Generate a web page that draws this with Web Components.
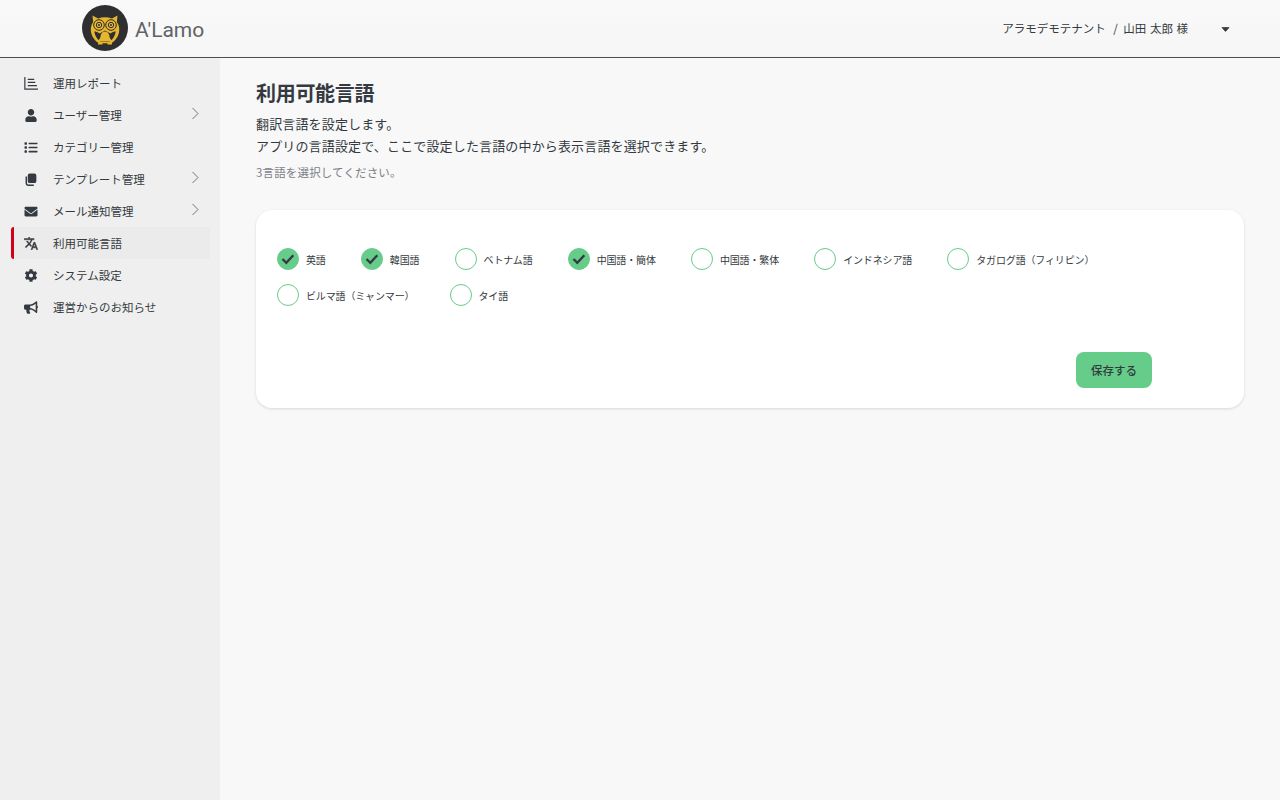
<!DOCTYPE html>
<html lang="ja"><head><meta charset="utf-8"><title>利用可能言語</title>
<style>
html,body{margin:0;height:100%}
body{font-family:"Noto Sans CJK JP","Noto Sans",sans-serif;background:#f8f8f9;color:#343a40}
</style></head><body>
<app-shell>
  <app-header slot="header"></app-header>
  <side-nav slot="nav">
    <nav-item icon="chart" label="運用レポート"></nav-item>
    <nav-item icon="user" label="ユーザー管理" arrow></nav-item>
    <nav-item icon="list" label="カテゴリー管理"></nav-item>
    <nav-item icon="copy" label="テンプレート管理" arrow></nav-item>
    <nav-item icon="mail" label="メール通知管理" arrow></nav-item>
    <nav-item icon="lang" label="利用可能言語" active></nav-item>
    <nav-item icon="cog" label="システム設定"></nav-item>
    <nav-item icon="horn" label="運営からのお知らせ"></nav-item>
  </side-nav>
  <lang-page>
    <lang-check checked>英語</lang-check>
    <lang-check checked>韓国語</lang-check>
    <lang-check>ベトナム語</lang-check>
    <lang-check checked>中国語・簡体</lang-check>
    <lang-check>中国語・繁体</lang-check>
    <lang-check>インドネシア語</lang-check>
    <lang-check>タガログ語（フィリピン）</lang-check>
    <lang-check>ビルマ語（ミャンマー）</lang-check>
    <lang-check>タイ語</lang-check>
  </lang-page>
</app-shell>
<script>
const ICONS={
chart:['0 0 13 12','<path fill="none" stroke="currentColor" stroke-width="1.100" d="M.8 0v11.200H13M3.500 2.200h6M3.500 5h7M3.500 7.900h8.500"/>'],
user:['0 0 448 512','<path fill="currentColor" d="M224 256c70.7 0 128-57.3 128-128S294.7 0 224 0 96 57.3 96 128s57.3 128 128 128zm89.6 32h-16.7c-22.2 10.2-46.9 16-72.9 16s-50.6-5.8-72.9-16h-16.7C60.2 288 0 348.2 0 422.4V464c0 26.5 21.5 48 48 48h352c26.5 0 48-21.5 48-48v-41.6c0-74.2-60.2-134.4-134.4-134.4z"/>'],
list:['0 0 512 512','<path fill="currentColor" d="M80 368H16a16 16 0 0 0-16 16v64a16 16 0 0 0 16 16h64a16 16 0 0 0 16-16v-64a16 16 0 0 0-16-16zm0-320H16A16 16 0 0 0 0 64v64a16 16 0 0 0 16 16h64a16 16 0 0 0 16-16V64a16 16 0 0 0-16-16zm0 160H16a16 16 0 0 0-16 16v64a16 16 0 0 0 16 16h64a16 16 0 0 0 16-16v-64a16 16 0 0 0-16-16zm416 176H176a16 16 0 0 0-16 16v32a16 16 0 0 0 16 16h320a16 16 0 0 0 16-16v-32a16 16 0 0 0-16-16zm0-320H176a16 16 0 0 0-16 16v32a16 16 0 0 0 16 16h320a16 16 0 0 0 16-16V80a16 16 0 0 0-16-16zm0 160H176a16 16 0 0 0-16 16v32a16 16 0 0 0 16 16h320a16 16 0 0 0 16-16v-32a16 16 0 0 0-16-16z"/>'],
copy:['0 0 16 16','<path fill="currentColor" d="M6.400 .6h5.800A2.400 2.400 0 0 1 14.600 3v7A2.400 2.400 0 0 1 12.200 12.400H6.400A2.400 2.400 0 0 1 4 10V3A2.400 2.400 0 0 1 6.400 .6z"/><path fill="none" stroke="currentColor" stroke-width="1.800" d="M2.200 4.400v7.800a2.800 2.800 0 0 0 2.800 2.800h6.400"/>'],
mail:['0 0 512 512','<path fill="currentColor" d="M502.3 190.8c3.9-3.1 9.7-.2 9.7 4.7V400c0 26.5-21.5 48-48 48H48c-26.5 0-48-21.5-48-48V195.6c0-5 5.7-7.8 9.7-4.7 22.4 17.4 52.1 39.5 154.1 113.6 21.1 15.4 56.7 47.8 92.2 47.6 35.7.3 72-32.8 92.3-47.6 102-74.1 131.6-96.3 154-113.7zM256 320c23.2.4 56.6-29.2 73.4-41.4 132.7-96.3 142.8-104.7 173.4-128.7 5.8-4.5 9.2-11.5 9.2-18.9v-19c0-26.5-21.5-48-48-48H48C21.5 64 0 85.500 0 112v19c0 7.4 3.4 14.3 9.2 18.9 30.6 23.9 40.7 32.4 173.4 128.7 16.8 12.2 50.2 41.8 73.4 41.4z"/>'],
lang:['1 1.500 22 21','<path fill="currentColor" stroke="currentColor" stroke-width=".7" d="M12.87 15.07l-2.54-2.51.03-.03c1.74-1.94 2.98-4.17 3.71-6.53H17V4h-7V2H8v2H1v1.99h11.17C11.5 7.92 10.44 9.75 9 11.35 8.07 10.32 7.3 9.19 6.69 8h-2c.73 1.63 1.73 3.17 2.98 4.56l-5.09 5.02L4 19l5-5 3.11 3.11.76-2.04zM18.5 10h-2L12 22h2l1.12-3h4.75L21 22h2l-4.5-12zm-2.62 7l1.62-4.33L19.12 17h-3.24z"/>'],
cog:['0 0 512 512','<path fill="currentColor" d="M487.4 315.7l-42.6-24.6c4.3-23.2 4.3-47 0-70.2l42.6-24.6c4.9-2.8 7.1-8.6 5.5-14-11.1-35.6-30-67.8-54.7-94.6-3.8-4.1-10-5.1-14.8-2.3L380.8 110c-17.9-15.4-38.5-27.3-60.8-35.1V25.8c0-5.6-3.9-10.5-9.4-11.7-36.7-8.2-74.3-7.8-109.2 0-5.5 1.2-9.4 6.1-9.4 11.7V75c-22.2 7.9-42.8 19.8-60.8 35.1L88.7 85.5c-4.9-2.8-11-1.9-14.8 2.3-24.7 26.7-43.6 58.9-54.7 94.6-1.7 5.4.6 11.2 5.5 14L67.3 221c-4.3 23.2-4.3 47 0 70.2l-42.6 24.6c-4.9 2.8-7.1 8.6-5.5 14 11.1 35.6 30 67.8 54.7 94.6 3.8 4.1 10 5.1 14.8 2.3l42.6-24.6c17.9 15.4 38.5 27.3 60.8 35.1v49.2c0 5.6 3.9 10.5 9.4 11.7 36.7 8.2 74.3 7.8 109.2 0 5.5-1.2 9.4-6.1 9.4-11.7v-49.2c22.2-7.9 42.8-19.8 60.8-35.1l42.6 24.6c4.9 2.8 11 1.9 14.8-2.3 24.7-26.7 43.6-58.9 54.7-94.6 1.5-5.5-.7-11.3-5.6-14.1zM256 336c-44.1 0-80-35.9-80-80s35.9-80 80-80 80 35.9 80 80-35.9 80-80 80z"/>'],
horn:['0 0 576 512','<path fill="currentColor" d="M576 240c0-23.63-12.95-44.04-32-55.12V32.01C544 23.26 537.02 0 512 0c-7.12 0-14.19 2.38-19.98 7.02l-85.03 68.03C364.28 109.19 310.66 128 256 128H64c-35.35 0-64 28.65-64 64v96c0 35.35 28.65 64 64 64h33.7c-1.39 10.48-2.18 21.14-2.18 32 0 39.77 9.26 77.35 25.56 110.94 5.19 10.69 16.52 17.06 28.4 17.06h74.28c26.05 0 41.69-29.84 25.9-50.56-16.4-21.52-26.15-48.36-26.15-77.44 0-11.11 1.62-21.79 4.41-32H256c54.66 0 108.28 18.81 150.98 52.95l85.03 68.03a32.023 32.023 0 0 0 19.98 7.02c24.92 0 32-22.78 32-32V295.13C563.05 284.04 576 263.63 576 240zm-96 141.42l-33.05-26.44C392.95 311.78 325.12 288 256 288v-96c69.12 0 136.95-23.78 190.95-66.98L480 98.58v282.84z"/>']
};
function def(name,css,html){
  customElements.define(name,class extends HTMLElement{
    constructor(){super();this.attachShadow({mode:'open'})}
    connectedCallback(){
      const h=typeof html==='function'?html(this):html;
      this.shadowRoot.innerHTML='<style>'+css+'</style>'+h;
    }
  });
}
def('app-shell',`:host{display:grid;grid-template-columns:220px 1fr;grid-template-rows:58px 1fr;height:100vh;overflow:hidden}
 ::slotted(app-header){grid-column:1/3}`,
 `<slot name="header"></slot><slot name="nav"></slot><slot></slot>`);
def('app-header',`:host{display:flex;align-items:center;box-sizing:border-box;height:58px;padding:0 50px 2px 82px;border-bottom:1px solid #4a4f55;background:linear-gradient(#f9f9f9,#f6f6f6)}
 .name{font:21px Roboto,sans-serif;color:#5f6368;margin-left:7px;padding-top:4px}
 .user{margin-left:auto;font-size:11.500px;color:#343a40;display:flex;align-items:center;white-space:pre}
 .sl{margin:0 3px 0 5px}
 .nm{word-spacing:1px}
 .caret{width:9px;height:5px;margin:3px 0 0 33px;display:block}
 svg{display:block}`,
 `<svg width="46" height="46" viewBox="0 0 46 46" role="img" aria-label="A'Lamo">
   <circle cx="23" cy="23" r="23" fill="#2f2f31"/>
   <path fill="#e6b62f" d="M10.500 10.500l5.500 3c4.500-1.600 9.500-1.600 14 0l5.500-3-.6 6.500c2.300 3 2.900 7 2 11-1.100 4.600-4 8.200-7.800 10.200H17c-3.800-2-6.700-5.600-7.800-10.200-.9-4-.3-8 1.900-11z"/>
   <path fill="#2f2f31" d="M12.300 26.500c1.500 0 3.500.6 5.200 2l5.500-3 5.500 3c1.700-1.400 3.700-2 5.200-2-.5 4.200-2.700 8-6.200 10H18.500c-3.500-2-5.700-5.800-6.200-10z"/>
   <g fill="#e6b62f" stroke="#2f2f31" stroke-width="1">
    <circle cx="17" cy="20" r="5.300"/><circle cx="29" cy="20" r="5.300"/>
    <circle cx="17" cy="20" r="2.700"/><circle cx="29" cy="20" r="2.700"/>
   </g>
   <circle cx="17" cy="20" r="1" fill="#2f2f31"/><circle cx="29" cy="20" r="1" fill="#2f2f31"/>
   <path fill="#e6b62f" d="M23 26.500c2.700 0 4.300 2 4.500 5 .1 1.600 1 2.500 2 3.700v1H16.500v-1c1-1.200 1.900-2.100 2-3.700.2-3 1.800-5 4.500-5z"/>
   <path fill="none" stroke="#e6b62f" stroke-width="1.500" d="M16 38.700h4.500M25.500 38.700H30"/>
  </svg><span class="name">A'Lamo</span>
  <span class="user">アラモデモテナント<span class="sl"> / </span><span class="nm">山田 太郎 様</span><svg class="caret" viewBox="0 0 9 5"><path fill="#343a40" stroke="#343a40" stroke-width=".8" stroke-linejoin="round" d="M1 .6h7L4.500 4.400z"/></svg></span>`);
def('side-nav',`:host{display:block;background:#efefef;padding:9px 10px 0 11px;box-sizing:border-box;min-height:0}`,`<slot></slot>`);
def('nav-item',`:host{display:flex;align-items:center;height:32px;box-sizing:border-box;font-size:11.500px;color:#343a40;position:relative;padding-left:12px}
 :host([active]){background:#ebebeb;border-radius:3px 0 0 3px}
 :host([active])::before{content:"";position:absolute;left:0;top:0;bottom:0;width:3px;background:#d0021b;border-radius:3px 0 0 3px}
 .ic{width:15px;height:14px;display:flex;align-items:center;justify-content:center;margin-right:15px;flex:none}
 svg{display:block}
 .lb{flex:1}
 .ar{position:absolute;left:180px;top:8px}`,
 el=>{const[v,p]=ICONS[el.getAttribute('icon')];
  return `<span class="ic"><svg width="14" height="13" viewBox="${v}">${p}</svg></span><span class="lb">${el.getAttribute('label')}</span>`+
  (el.hasAttribute('arrow')?`<svg class="ar" width="9" height="13" viewBox="0 0 9 13"><path fill="none" stroke="#6c757d" stroke-width="1" d="M1.500 1l5.500 5.500-5.500 5.500"/></svg>`:'');});
def('lang-page',`:host{display:block;padding:20px 36px 0;min-width:0}
 h1{margin:0;font-size:20px;line-height:30px;font-weight:700;color:#343a40;letter-spacing:-.3px}
 p{margin:0;font-size:13px;line-height:22px;color:#343a40;letter-spacing:.15px}
 .d{margin-top:5px}
 .h{margin-top:6px;font-size:11.500px;line-height:18px;color:#7a7f85}
 .card{margin-top:29px;background:#fff;border-radius:16px;box-shadow:0 1px 3px rgba(0,0,0,.13);padding:38px 21px 20px;height:198px;box-sizing:border-box;display:flex;flex-direction:column}
 .opts{display:flex;flex-wrap:wrap;row-gap:14px}
 .act{margin-top:auto;display:flex;justify-content:flex-end;padding-right:71px}
 button{width:76px;height:36px;border:0;border-radius:8px;background:#66cc8a;color:#343a40;font:500 11.500px "Noto Sans CJK JP",sans-serif;padding:0}`,
 `<h1>利用可能言語</h1><p class="d">翻訳言語を設定します。<br>アプリの言語設定で、ここで設定した言語の中から表示言語を選択できます。</p><p class="h">3言語を選択してください。</p>
 <section class="card"><div class="opts"><slot></slot></div><div class="act"><button>保存する</button></div></section>`);
def('lang-check',`:host{display:flex;align-items:center;height:22px;margin-right:35.150px;font-size:10px;color:#343a40;letter-spacing:-.15px}
 .b{width:22px;height:22px;box-sizing:border-box;border-radius:50%;border:1px solid #66cc8a;background:#fff;margin-right:7px;display:flex;align-items:center;justify-content:center}
 :host([checked]) .b{background:#66cc8a}
 svg{display:block}`,
 el=>`<span class="b">${el.hasAttribute('checked')?'<svg width="14" height="12" viewBox="0 0 14 12"><path fill="none" stroke="#343a40" stroke-width="2.300" d="M1.500 6l3.800 3.800 7-7.600"/></svg>':''}</span><slot></slot>`);
</script>
</body></html>
